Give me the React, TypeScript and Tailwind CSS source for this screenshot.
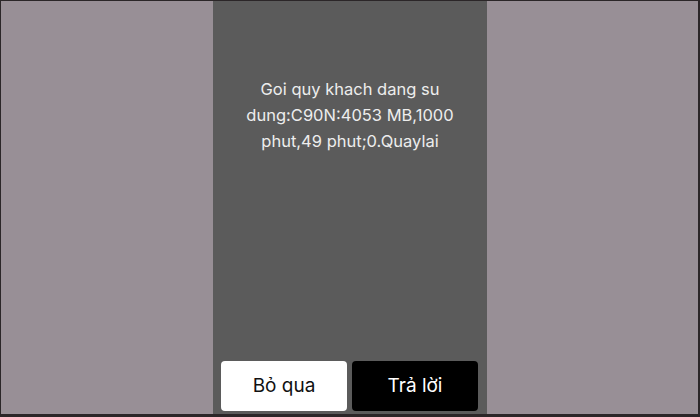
export default function App() {
  return (
    <div className="flex h-[417px] w-[700px] border-t border-l border-r-2 border-b-[3px] border-[#2b2628] bg-[#988f96] font-['Inter','Liberation_Sans',sans-serif]">
      <div className="ml-[212px] flex w-[274px] flex-col bg-[#5b5b5b]">
        {/* message */}
        <div className="flex-1 px-8 pt-[75px] text-center text-[16.5px] leading-[26px] text-[#ededed]">
          Goi quy khach dang su dung:C90N:4053 MB,1000 phut,49 phut;0.Quaylai
        </div>
        {/* actions */}
        <div className="flex gap-[5px] pb-[3px] pl-2 pr-[9px]">
          <button className="h-[50px] flex-1 rounded-[4px] bg-white text-[19px] text-[#111]">Bỏ qua</button>
          <button className="h-[50px] flex-1 rounded-[4px] bg-black text-[19px] text-white">Trả lời</button>
        </div>
      </div>
    </div>
  );
}
